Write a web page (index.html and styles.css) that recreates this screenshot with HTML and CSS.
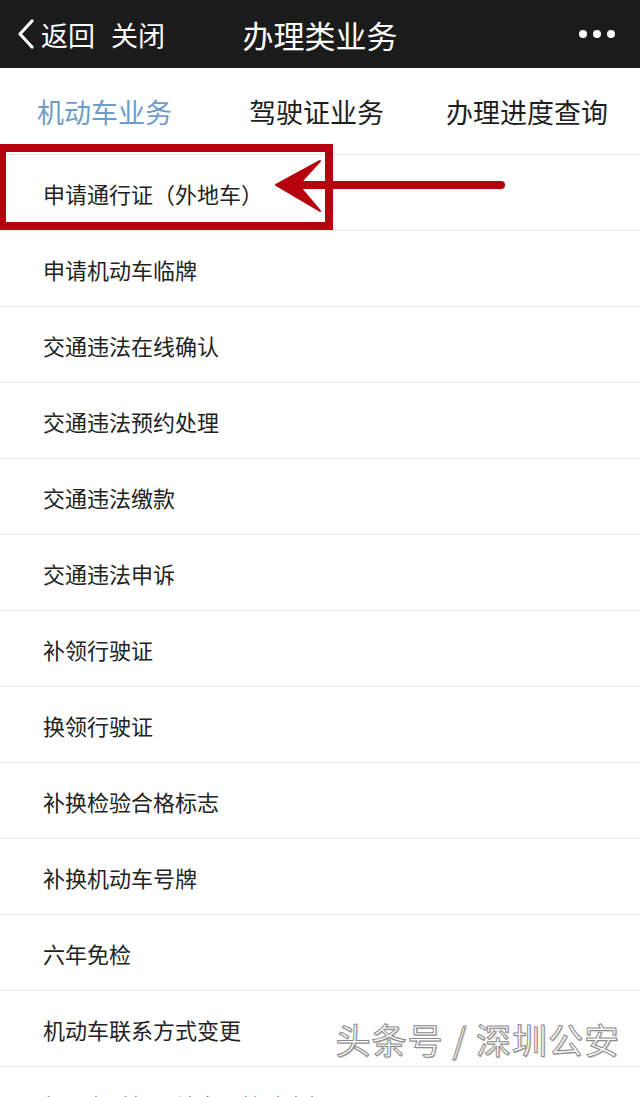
FILE: index.html
```html
<!DOCTYPE html>
<html lang="zh-CN">
<head>
    <meta charset="UTF-8">
    <meta name="viewport" content="width=device-width, initial-scale=1.0">
    <title>办理类业务</title>
    <link rel="stylesheet" href="styles.css">
</head>
<body>
    <header class="topbar">
        <div class="topbar-left">
            <svg class="back-icon" width="18" height="30" viewBox="0 0 18 30">
                <path d="M15 2 L3 15 L15 28" fill="none" stroke="#fff" stroke-width="3.2" stroke-linecap="round" stroke-linejoin="round"/>
            </svg>
            <span class="back">返回</span>
            <span class="close">关闭</span>
        </div>
        <h1 class="title">办理类业务</h1>
        <div class="more">
            <span class="dot"></span><span class="dot"></span><span class="dot"></span>
        </div>
    </header>

    <nav class="tabs">
        <a class="tab active" href="#car">机动车业务</a>
        <a class="tab" href="#license">驾驶证业务</a>
        <a class="tab" href="#progress">办理进度查询</a>
    </nav>

    <main class="content">
        <ul class="list">
            <li>申请通行证（外地车）</li>
            <li>申请机动车临牌</li>
            <li>交通违法在线确认</li>
            <li>交通违法预约处理</li>
            <li>交通违法缴款</li>
            <li>交通违法申诉</li>
            <li>补领行驶证</li>
            <li>换领行驶证</li>
            <li>补换检验合格标志</li>
            <li>补换机动车号牌</li>
            <li>六年免检</li>
            <li>机动车联系方式变更</li>
            <li>机动车委托异地定期检验申报</li>
        </ul>

        <div class="mark-box"></div>
        <svg class="mark-arrow" width="245" height="64" viewBox="0 0 245 64">
            <line x1="26" y1="30" x2="231" y2="30" stroke="#b5000d" stroke-width="8" stroke-linecap="round"/>
            <path d="M6 30 L50 6 L28 30 L50 56 Z" fill="#b5000d" stroke="#b5000d" stroke-width="2" stroke-linejoin="round"/>
        </svg>
    </main>

    <div class="watermark">头条号 / 深圳公安</div>
</body>
</html>
```

FILE: styles.css
```css
:root {
    --bar-color: #1b1b1b;
    --text-color: #222;
    --tab-active: #6d9dc7;
    --line-color: #e6e6e6;
    --mark-color: #b5000d;
}
body {
    margin: 0;
    padding: 0;
    font-family: "Noto Sans CJK SC", "Noto Sans", sans-serif;
    color: var(--text-color);
    background-color: #fff;
    overflow: hidden;
}
.topbar {
    height: 68px;
    background: var(--bar-color);
    color: #fff;
    display: flex;
    align-items: center;
    position: relative;
}
.topbar-left {
    display: flex;
    align-items: center;
    padding-left: 17px;
}
.back-icon {
    margin-right: 6px;
}
.back,
.close {
    font-size: 27px;
    line-height: 1;
}
.close {
    margin-left: 16px;
}
.title {
    position: absolute;
    left: 0;
    right: 0;
    margin: 0;
    text-align: center;
    font-size: 31px;
    font-weight: normal;
    pointer-events: none;
}
.more {
    margin-left: auto;
    padding-right: 25px;
    display: flex;
    gap: 6px;
}
.dot {
    width: 8px;
    height: 8px;
    border-radius: 50%;
    background: #fff;
}
.tabs {
    height: 86px;
    display: flex;
    align-items: center;
    padding-left: 37px;
    border-bottom: 1px solid var(--line-color);
}
.tab {
    font-size: 27px;
    color: #1e1e1e;
    text-decoration: none;
    white-space: nowrap;
}
.tab:nth-child(2) {
    margin-left: 77px;
}
.tab:nth-child(3) {
    margin-left: 62px;
}
.tab.active {
    color: var(--tab-active);
}
.content {
    position: relative;
}
.list {
    list-style: none;
    margin: 0;
    padding: 0;
}
.list li {
    height: 75px;
    display: flex;
    align-items: center;
    padding-left: 43px;
    font-size: 22px;
    line-height: 1;
    border-bottom: 1px solid var(--line-color);
}
.mark-box {
    position: absolute;
    left: 0;
    top: -11px;
    width: 319px;
    height: 70px;
    border: 8px solid var(--mark-color);
    border-left-width: 6px;
}
.mark-arrow {
    position: absolute;
    left: 270px;
    top: 0;
}
.watermark {
    position: absolute;
    right: 20px;
    top: 1013px;
    font-size: 35px;
    letter-spacing: 1px;
    color: #fff;
    -webkit-text-stroke: 1px #8a8a8a;
    text-shadow: 1px 1px 1px rgba(0, 0, 0, 0.25);
}
```
